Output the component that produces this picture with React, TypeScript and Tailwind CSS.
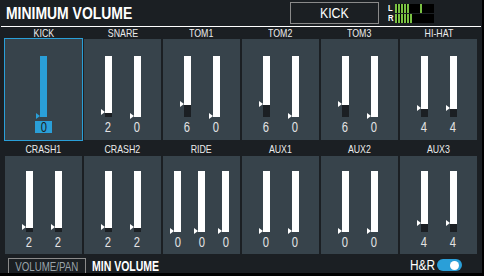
import React from "react";

type Pad = { name: string; values: number[]; selected?: boolean };

const row1: Pad[] = [
  { name: "KICK", values: [0], selected: true },
  { name: "SNARE", values: [2, 0] },
  { name: "TOM1", values: [6, 0] },
  { name: "TOM2", values: [6, 0] },
  { name: "TOM3", values: [6, 0] },
  { name: "HI-HAT", values: [4, 4] },
];

const row2: Pad[] = [
  { name: "CRASH1", values: [2, 2] },
  { name: "CRASH2", values: [2, 2] },
  { name: "RIDE", values: [0, 0, 0] },
  { name: "AUX1", values: [0, 0] },
  { name: "AUX2", values: [0, 0] },
  { name: "AUX3", values: [4, 4] },
];

// no narrow face installed, so the panel's condensed type is squeezed with scale-x
const font = { fontFamily: '"Liberation Sans", Arial, sans-serif' };

const Slider = ({ value, selected }: { value: number; selected?: boolean }) => {
  return (
    <div className="flex flex-col items-center">
      <div className="relative w-[7px] h-[61px]">
        <div className={selected ? "w-full h-full bg-[#2a9fd8]" : "w-full h-full bg-white"} />
        <div
          className="absolute left-0 bottom-0 w-full bg-[#1b1f23]"
          style={{ height: value * 2 }}
        />
        <div
          className={
            "absolute left-[-4px] w-0 h-0 border-y-[3px] border-y-transparent border-l-[4px] " +
            (selected ? "border-l-[#2a9fd8]" : "border-l-white")
          }
          style={{ bottom: value * 2 - 2 }}
        />
      </div>
      <div
        className={
          selected
            ? "mt-[4px] w-[17px] h-[12px] bg-[#2a9fd8] text-[#1b1f23] text-[14px] leading-[13px] text-center"
            : "mt-[4px] w-[17px] h-[12px] text-[#e4e4e4] text-[14px] leading-[13px] text-center"
        }
        style={font}
      >
        <span className="inline-block scale-x-[0.8]">{value}</span>
      </div>
    </div>
  );
};

const Cell = ({ pad, tall }: { pad: Pad; tall: boolean }) => {
  const gap = pad.values.length === 3 ? "gap-[7px]" : "gap-[12px]";
  return (
    <div className="flex flex-col">
      <div
        className={
          "text-center text-[11px] text-[#ececec] " +
          (tall ? "h-[12px] leading-[13px]" : "h-[16px] leading-[18px]")
        }
        style={font}
      >
        <span className="inline-block scale-x-[0.8]">{pad.name}</span>
      </div>
      <div
        className={
          "flex justify-center bg-[#37434b] " +
          (tall ? "h-[101px] pt-[17px] " : "h-[98px] pt-[15px] ") +
          (pad.selected ? "outline outline-1 outline-[#2a9fd8]" : "")
        }
      >
        <div className={"flex " + gap}>
          {pad.values.map((v, i) => (
            <Slider key={i} value={v} selected={pad.selected} />
          ))}
        </div>
      </div>
    </div>
  );
};

const Meter = ({ label, segs, peak }: { label: string; segs: number; peak?: number }) => {
  return (
    <div className="flex items-center h-[9px] gap-[1px]">
      <span className="w-[6px] text-[9px] leading-[9px] font-bold text-white" style={font}>
        <span className="inline-block scale-x-[0.85] origin-left">{label}</span>
      </span>
      <div className="relative flex w-[39px] h-[9px] bg-black gap-[1px]">
        {Array.from({ length: segs }).map((_, i) => (
          <div key={i} className="w-[2px] h-full bg-[#7ac143]" />
        ))}
        {peak !== undefined && (
          <div className="absolute top-0 w-[2px] h-full bg-[#7ac143]" style={{ left: peak }} />
        )}
      </div>
    </div>
  );
};

export default function App() {
  return (
    <div className="w-[484px] h-[276px] bg-black overflow-hidden">
      <div className="relative w-[482px] h-[273px] bg-[#1b1f23] overflow-hidden">
        <div className="flex items-center h-[27px] border-b border-white mx-[1px]">
          <div className="w-[289px] pl-[5px] text-[17px] font-bold text-white leading-none" style={font}>
            <span className="inline-block scale-x-[0.82] origin-left">MINIMUM VOLUME</span>
          </div>
          <div
            className="w-[89px] h-[22px] border border-[#8a8a8a] flex items-center justify-center text-[14px] text-white"
            style={font}
          >
            <span className="inline-block scale-x-[0.88]">KICK</span>
          </div>
          <div className="ml-[9px] flex flex-col gap-[1px]">
            <Meter label="L" segs={5} peak={25} />
            <Meter label="R" segs={6} />
          </div>
        </div>
        <div className="pl-[5px] grid grid-cols-[repeat(6,77px)] gap-x-[2px]">
          {row1.map((p) => (
            <Cell key={p.name} pad={p} tall />
          ))}
          {row2.map((p) => (
            <Cell key={p.name} pad={p} tall={false} />
          ))}
        </div>
        <div className="flex items-start pt-[4px]">
          <div
            className="ml-[8px] w-[78px] h-[20px] border border-[#8a8a8a] flex justify-center text-[#9aa4aa] text-[13.5px] leading-[16px] whitespace-nowrap"
            style={font}
          >
            <span className="inline-block shrink-0 scale-x-[0.72]">VOLUME/PAN</span>
          </div>
          <div className="ml-[6px] w-[90px] text-[14px] leading-[16px] font-bold text-white" style={font}>
            <span className="inline-block scale-x-[0.75] origin-left">MIN VOLUME</span>
          </div>
          <div className="ml-auto mr-[20px] flex items-center">
            <span className="w-[27px] text-[14px] leading-[14px] text-white whitespace-nowrap" style={font}>
              <span className="inline-block scale-x-[0.85] origin-left">H&amp;R</span>
            </span>
            <div className="w-[25px] h-[12px] rounded-full bg-[#2a9fd8] flex items-center justify-end pr-[3px]">
              <div className="w-[9px] h-[9px] rounded-full bg-white" />
            </div>
          </div>
        </div>
      </div>
    </div>
  );
}
